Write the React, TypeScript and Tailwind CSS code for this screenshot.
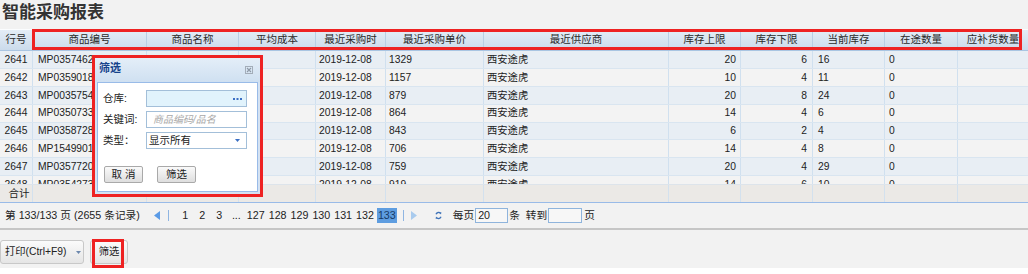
import React from 'react';

type Col = { name: string; w: string; cell: string };

const cols: Col[] = [
  { name: '行号', w: 'w-[33px]', cell: 'justify-center' },
  { name: '商品编号', w: 'w-[114px]', cell: 'justify-start pl-[5px]' },
  { name: '商品名称', w: 'w-[92px]', cell: 'justify-start pl-[4px]' },
  { name: '平均成本', w: 'w-[77px]', cell: 'justify-end pr-[4px]' },
  { name: '最近采购时', w: 'w-[70px]', cell: 'justify-start pl-[3px]' },
  { name: '最近采购单价', w: 'w-[98px]', cell: 'justify-start pl-[3px]' },
  { name: '最近供应商', w: 'w-[185px]', cell: 'justify-start pl-[3px]' },
  { name: '库存上限', w: 'w-[72px]', cell: 'justify-end pr-[4px]' },
  { name: '库存下限', w: 'w-[72px]', cell: 'justify-end pr-[5px]' },
  { name: '当前库存', w: 'w-[72px]', cell: 'justify-start pl-[5px]' },
  { name: '在途数量', w: 'w-[73px]', cell: 'justify-start pl-[4px]' },
  { name: '应补货数量', w: 'w-[70px]', cell: 'justify-start pl-[4px]' },
];

const rows: string[][] = [
  ['2641', 'MP03574621', '', '', '2019-12-08', '1329', '西安途虎', '20', '6', '16', '0', ''],
  ['2642', 'MP03590182', '', '', '2019-12-08', '1157', '西安途虎', '10', '4', '11', '0', ''],
  ['2643', 'MP00357543', '', '', '2019-12-08', '879', '西安途虎', '20', '8', '24', '0', ''],
  ['2644', 'MP03507334', '', '', '2019-12-08', '864', '西安途虎', '14', '4', '6', '0', ''],
  ['2645', 'MP03587285', '', '', '2019-12-08', '843', '西安途虎', '6', '2', '4', '0', ''],
  ['2646', 'MP15499016', '', '', '2019-12-08', '706', '西安途虎', '14', '4', '8', '0', ''],
  ['2647', 'MP03577207', '', '', '2019-12-08', '759', '西安途虎', '20', '4', '29', '0', ''],
  ['2648', 'MP03542738', '', '', '2019-12-08', '919', '西安途虎', '14', '6', '10', '0', ''],
];

const pages = ['1', '2', '3', '...', '127', '128', '129', '130', '131', '132', '133'];

function Refresh() {
  return (
    <svg width="7" height="9" viewBox="0 0 7 9" className="block">
      <path d="M1 3.2 A2.6 2.6 0 0 1 5.6 2.6" fill="none" stroke="#3f73b8" strokeWidth="1.3" />
      <path d="M6 5.8 A2.6 2.6 0 0 1 1.4 6.4" fill="none" stroke="#3f73b8" strokeWidth="1.3" />
      <path d="M4.2 1.4 L6.4 1.2 L6 3.6 Z" fill="#3f73b8" />
      <path d="M2.8 7.6 L0.6 7.8 L1 5.4 Z" fill="#3f73b8" />
    </svg>
  );
}

export default function App() {
  return (
    <div className="relative w-[1028px] h-[268px] bg-[#f2f2f2] overflow-hidden text-[#222] font-['Liberation_Sans','Noto_Sans_CJK_SC',sans-serif]">
      {/* title */}
      <div className="h-[29px] pl-[2px] text-[17px] leading-[21px] font-bold text-[#333] font-['Noto_Sans_CJK_SC',sans-serif]">
        智能采购报表
      </div>

      {/* grid */}
      <div className="text-[10.3px]">
        <div className="flex h-[22px] border-t border-t-[#fbfdff] border-b border-b-[#a9c5e2] bg-gradient-to-b from-[#e4edf6] to-[#cbdbec]">
          {cols.map((c, i) => (
            <div
              key={c.name}
              className={`${c.w} shrink-0 flex items-center justify-center text-[10.5px] text-[#2a2a2a] ${i < cols.length - 1 ? 'border-r border-r-[#b9cee4]' : ''}`}
            >
              {c.name}
            </div>
          ))}
        </div>

        <div className="h-[133px] overflow-hidden">
          {rows.map((r, ri) => (
            <div
              key={ri}
              className={`flex h-[17.9px] border-b border-b-[#d9e5f0] ${ri % 2 === 0 ? 'bg-[#e8eef4]' : 'bg-[#f3f3f3]'}`}
            >
              {r.map((v, ci) => (
                <div
                  key={ci}
                  className={`${cols[ci].w} ${cols[ci].cell} shrink-0 flex items-center overflow-hidden whitespace-nowrap ${ci < cols.length - 1 ? 'border-r border-r-[#d0e0ef]' : ''}`}
                >
                  {v}
                </div>
              ))}
            </div>
          ))}
        </div>

        {/* total row */}
        <div className="flex h-[18px] bg-[#ebe9e6] border-t border-t-[#dde4eb]">
          {cols.map((c, ci) => (
            <div
              key={c.name}
              className={`${c.w} shrink-0 flex items-center justify-center text-[10.5px] ${ci === 0 ? 'pl-[6px]' : ''} ${ci < cols.length - 1 ? 'border-r border-r-[#d3e1ee]' : ''}`}
            >
              {ci === 0 ? '合计' : ''}
            </div>
          ))}
        </div>
      </div>

      {/* pagination */}
      <div className="h-[28px] border-t border-t-[#99bbe8] border-b-2 border-b-[#c6c6c6] flex items-center pl-[5px] text-[10.7px] text-[#222] whitespace-nowrap">
        <span>第 133/133 页 (2655 条记录)</span>
        <svg width="6" height="9" viewBox="0 0 6 9" className="ml-[14px] block">
          <path d="M6 0 L0 4.5 L6 9 Z" fill="#5b9be6" />
        </svg>
        <div className="ml-[8px] w-px h-[11px] bg-[#8fb5e2]" />
        <div className="ml-[9px] flex items-center">
          {pages.map((p) => (
            <span
              key={p}
              className={`min-w-[15px] h-[15px] leading-[15px] px-[1px] mr-[2px] text-center ${p === '133' ? 'bg-[#5e9de0] text-[#163a66]' : ''}`}
            >
              {p}
            </span>
          ))}
        </div>
        <div className="ml-[4px] w-px h-[11px] bg-[#8fb5e2]" />
        <svg width="6" height="9" viewBox="0 0 6 9" className="ml-[7px] block">
          <path d="M0 0 L6 4.5 L0 9 Z" fill="#a9cbee" />
        </svg>
        <div className="ml-[18px]">
          <Refresh />
        </div>
        <span className="ml-[11px]">每页</span>
        <div className="ml-[1px] w-[33px] h-[15px] border border-[#8fb4dc] bg-[#f7f7f7] flex items-center pl-[2px] leading-none">20</div>
        <span className="ml-[1px]">条</span>
        <span className="ml-[6px]">转到</span>
        <div className="ml-[1px] w-[34px] h-[15px] border border-[#8fb4dc] bg-[#f7f7f7]" />
        <span className="ml-[2px]">页</span>
      </div>

      {/* toolbar */}
      <div className="flex items-start pt-[10px] gap-[6px] text-[10.3px] text-[#222]">
        <div className="h-[24px] w-[84px] rounded-[3px] border border-[#c8c8c8] bg-gradient-to-b from-[#fbfbfb] to-[#e5e5e5] flex items-center pl-[4px]">
          <span>打印(Ctrl+F9)</span>
          <svg width="5" height="3" viewBox="0 0 5 3" className="ml-[9px] block">
            <path d="M0 0 L5 0 L2.5 3 Z" fill="#6c88ad" />
          </svg>
        </div>
        <div className="h-[24px] w-[38px] rounded-[3px] border border-[#c8c8c8] bg-gradient-to-b from-[#fbfbfb] to-[#e5e5e5] flex items-center justify-center">
          筛选
        </div>
      </div>

      {/* header annotation box */}
      <div className="absolute left-[32px] top-[29px] w-[990px] h-[21px] border-[3px] border-[#ee2222] pointer-events-none" />

      {/* filter dialog */}
      <div className="absolute left-[92px] top-[55px] w-[171px] h-[142px] border-[3px] border-[#ee2222] bg-[#d4e2f2] text-[10.5px]">
        <div className="h-[24px] bg-gradient-to-b from-[#e4eef8] to-[#cfe0f1] flex items-start justify-between pl-[4px] pr-[7px] pt-[4px]">
          <span className="text-[11px] leading-[12px] font-bold text-[#15428b]">筛选</span>
          <svg width="8" height="8" viewBox="0 0 8 8" className="mt-[4px] block">
            <rect x="0.5" y="0.5" width="7" height="7" fill="none" stroke="#a3adb9" strokeWidth="1" />
            <path d="M2 2 L6 6 M6 2 L2 6" stroke="#8e99a6" strokeWidth="1.1" />
          </svg>
        </div>
        <div className="mx-[2px] h-[110px] bg-white border border-[#99bbe8] pl-[5px] pt-[7px]">
          <div className="flex items-center h-[17px]">
            <span className="w-[43px]">仓库:</span>
            <div className="w-[101px] h-[17px] border border-[#a3bfd9] bg-[#e1f3fc] flex items-center justify-end pr-[4px]">
              <svg width="9" height="2" viewBox="0 0 9 2" className="block">
                <rect x="0" y="0" width="2" height="2" fill="#3a6fc4" />
                <rect x="3.5" y="0" width="2" height="2" fill="#3a6fc4" />
                <rect x="7" y="0" width="2" height="2" fill="#3a6fc4" />
              </svg>
            </div>
          </div>
          <div className="flex items-center h-[17px] mt-[4px]">
            <span className="w-[43px]">关键词:</span>
            <div className="w-[101px] h-[17px] border border-[#a3bfd9] bg-white flex items-center pl-[6px]">
              <span className="italic text-[#a8a8a8] text-[10px]">商品编码/品名</span>
            </div>
          </div>
          <div className="flex items-center h-[17px] mt-[4px]">
            <span className="w-[43px]">类型：</span>
            <div className="w-[101px] h-[17px] border border-[#a3bfd9] bg-white flex items-center justify-between pl-[2px] pr-[6px]">
              <span>显示所有</span>
              <svg width="5" height="3" viewBox="0 0 5 3" className="block">
                <path d="M0 0 L5 0 L2.5 3 Z" fill="#3a6fc4" />
              </svg>
            </div>
          </div>
          <div className="flex items-center mt-[17px] ml-[1px] gap-[14px]">
            <div className="w-[39px] h-[17px] rounded-[2px] border border-[#a9a9a9] bg-gradient-to-b from-[#fafafa] to-[#dedede] flex items-center justify-center">
              取 消
            </div>
            <div className="w-[39px] h-[17px] rounded-[2px] border border-[#a9a9a9] bg-gradient-to-b from-[#fafafa] to-[#dedede] flex items-center justify-center">
              筛选
            </div>
          </div>
        </div>
      </div>

      {/* bottom button annotation box */}
      <div className="absolute left-[92px] top-[239px] w-[32px] h-[29px] border-[3px] border-[#ee2222] pointer-events-none" />
    </div>
  );
}
